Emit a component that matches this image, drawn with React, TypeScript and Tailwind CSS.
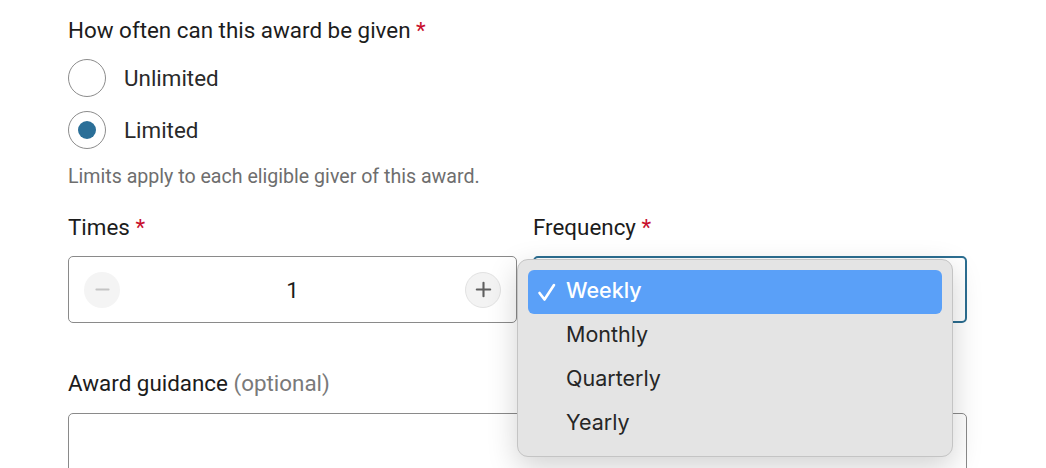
import { Minus, Plus } from 'lucide-react'

const options = ['Weekly', 'Monthly', 'Quarterly', 'Yearly']

function Required() {
  return <span className="text-[#c8102e]"> *</span>
}

function Radio({ label, checked }: { label: string; checked?: boolean }) {
  return (
    <label className="flex items-center gap-[18px]">
      <span className="flex h-[38px] w-[38px] items-center justify-center rounded-full border border-[#8c8c8c] bg-white">
        {checked && <span className="h-[18px] w-[18px] rounded-full bg-[#2b6f98]" />}
      </span>
      <span className="text-[22.4px] leading-7 text-[#2a2a2a]">{label}</span>
    </label>
  )
}

export default function App() {
  return (
    <div className="h-[468px] w-[1046px] overflow-hidden bg-white px-[68px] pt-4 font-['Roboto',sans-serif] text-[#1c1c1c]">
      <div className="text-[22.4px] leading-7">
        How often can this award be given
        <Required />
      </div>

      <div className="mt-[15px] flex flex-col gap-[14px]">
        <Radio label="Unlimited" />
        <Radio label="Limited" checked />
      </div>

      <p className="mt-4 text-[19.6px] leading-6 text-[#6e6e6e]">
        Limits apply to each eligible giver of this award.
      </p>

      <div className="mt-6 grid grid-cols-[449px_434px] gap-x-4">
        <div className="text-[22.4px] leading-7">
          Times
          <Required />
        </div>
        <div className="text-[22.4px] leading-7">
          Frequency
          <Required />
        </div>

        <div className="mt-[15px] flex h-[67px] items-center justify-between rounded-[5px] border border-[#8a8a8a] px-[15px]">
          <button className="flex h-9 w-9 items-center justify-center rounded-full bg-[#f4f4f4] text-[#c4c4c4]">
            <Minus size={21} strokeWidth={2.2} />
          </button>
          <span className="text-[22.4px] leading-7">1</span>
          <button className="flex h-9 w-9 items-center justify-center rounded-full border border-[#e2e2e2] bg-[#f3f3f3] text-[#5f5f5f]">
            <Plus size={23} strokeWidth={2.2} />
          </button>
        </div>

        <div className="relative mt-[15px] h-[67px] rounded-[5px] border-2 border-[#2c6e91]">
          <div className="absolute left-[-18px] top-[1px] z-10 w-[436px] rounded-[11px] border border-[#c4c4c4] bg-[#e4e4e4] px-[10px] py-[10px] font-['Inter',sans-serif] shadow-[0_10px_30px_rgba(0,0,0,0.18)]">
            {options.map((o, i) => (
              <div
                key={o}
                className={
                  i === 0
                    ? 'flex h-[44px] items-center rounded-[6px] bg-[#5aa0f8] text-white'
                    : 'flex h-[44px] items-center text-[#262626]'
                }
              >
                <span className="flex w-[38px] justify-end pr-[9px]">
                  {i === 0 && (
                    <svg width="20" height="20" viewBox="0 0 20 20" fill="none">
                      <path d="M2.5 11 L7.5 17.5 L17 3" stroke="white" strokeWidth="2.6" strokeLinecap="round" strokeLinejoin="round" />
                    </svg>
                  )}
                </span>
                <span className={i === 0 ? 'mb-[4px] text-[21.5px] font-medium' : 'mb-[4px] text-[21.5px]'}>{o}</span>
              </div>
            ))}
          </div>
        </div>
      </div>

      <div className="mt-[46px] text-[22.4px] leading-7">
        Award guidance <span className="text-[#7a7a7a]">(optional)</span>
      </div>
      <div className="mt-4 h-[120px] w-[899px] rounded-[5px] border border-[#8a8a8a]" />
    </div>
  )
}
